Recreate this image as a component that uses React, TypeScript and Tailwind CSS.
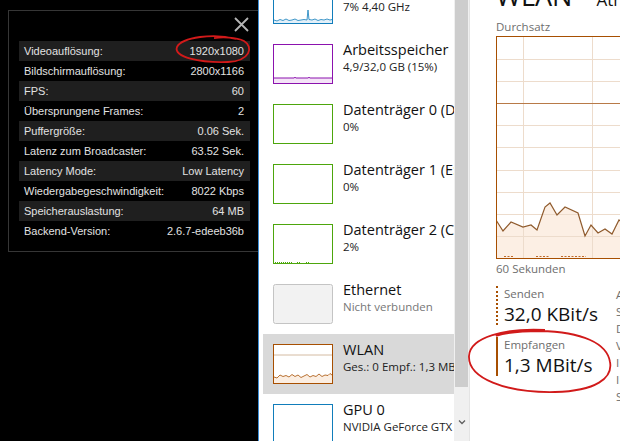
import type { ReactNode } from "react"

const stats: [string, string][] = [
  ["Videoauflösung:", "1920x1080"],
  ["Bildschirmauflösung:", "2800x1166"],
  ["FPS:", "60"],
  ["Übersprungene Frames:", "2"],
  ["Puffergröße:", "0.06 Sek."],
  ["Latenz zum Broadcaster:", "63.52 Sek."],
  ["Latency Mode:", "Low Latency"],
  ["Wiedergabegeschwindigkeit:", "8022 Kbps"],
  ["Speicherauslastung:", "64 MB"],
  ["Backend-Version:", "2.6.7-edeeb36b"],
]

type Item = {
  title: string
  sub: string
  color: string
  kind: "cpu" | "mem" | "disk" | "disk2" | "eth" | "wlan" | "gpu"
  selected?: boolean
  subGray?: boolean
}

const items: Item[] = [
  { title: "CPU", sub: "7% 4,40 GHz", color: "#117dbb", kind: "cpu" },
  { title: "Arbeitsspeicher", sub: "4,9/32,0 GB (15%)", color: "#8b12ae", kind: "mem" },
  { title: "Datenträger 0 (D:)", sub: "0%", color: "#4da60c", kind: "disk" },
  { title: "Datenträger 1 (E:)", sub: "0%", color: "#4da60c", kind: "disk" },
  { title: "Datenträger 2 (C:)", sub: "2%", color: "#4da60c", kind: "disk2" },
  { title: "Ethernet", sub: "Nicht verbunden", color: "#c4c4c4", kind: "eth", subGray: true },
  { title: "WLAN", sub: "Ges.: 0 Empf.: 1,3 MBit/s", color: "#a74f01", kind: "wlan", selected: true },
  { title: "GPU 0", sub: "NVIDIA GeForce GTX 1080", color: "#117dbb", kind: "gpu" },
]

function Thumb({ item }: { item: Item }) {
  let inner: ReactNode = null
  if (item.kind === "cpu") {
    inner = (
      <>
        <path d="M1 39 L1 36 L4 37 L7 35.5 L10 36.5 L13 35 L16 36.5 L19 36 L22 35 L25 36.5 L28 36 L31 35.5 L34 36 L35 26 L36 35.5 L39 36 L42 35 L45 36.5 L48 35.5 L51 36 L54 35 L57 36 L59 35.5 L59 39 Z" fill="#e3f0f9" stroke="none" />
        <path d="M1 36 L4 37 L7 35.5 L10 36.5 L13 35 L16 36.5 L19 36 L22 35 L25 36.5 L28 36 L31 35.5 L34 36 L35 26 L36 35.5 L39 36 L42 35 L45 36.5 L48 35.5 L51 36 L54 35 L57 36 L59 35.5" fill="none" stroke="#117dbb" strokeWidth="0.8" />
      </>
    )
  } else if (item.kind === "mem") {
    inner = (
      <>
        <rect x="1" y="34" width="58" height="5" fill="#f4e4f7" />
        <path d="M1 34 L21 34 L22 33.3 L23 34 L35 34 L36 33.3 L37 34 L59 34" fill="none" stroke="#8b12ae" strokeWidth="1" />
      </>
    )
  } else if (item.kind === "disk2") {
    inner = <path d="M2 38.5 L20 38.5 M24 38.5 L27 38.5 M33 38.5 L36 38.5" stroke="#4da60c" strokeWidth="1" strokeDasharray="1 1" />
  } else if (item.kind === "wlan") {
    inner = (
      <>
        <path d="M1 11 L59 11" stroke="#c9a98a" strokeWidth="0.8" />
        <path d="M1 39 L1 33 L4 34 L7 31 L10 32.5 L13 31.5 L16 33 L19 30.5 L22 32.5 L25 31 L28 33.5 L31 32 L34 30.5 L37 33 L40 31.5 L43 32.5 L46 30 L49 32.5 L52 31 L55 31.5 L57 29.5 L59 31 L59 39 Z" fill="#fbeee2" />
        <path d="M1 33 L4 34 L7 31 L10 32.5 L13 31.5 L16 33 L19 30.5 L22 32.5 L25 31 L28 33.5 L31 32 L34 30.5 L37 33 L40 31.5 L43 32.5 L46 30 L49 32.5 L52 31 L55 31.5 L57 29.5 L59 31" fill="none" stroke="#a74f01" strokeWidth="0.8" />
      </>
    )
  }
  return (
    <svg width="60" height="40" viewBox="0 0 60 40" className="shrink-0 block">
      <rect
        x="0.5"
        y="0.5"
        width="59"
        height="39"
        rx={item.kind === "eth" ? 2 : 0}
        fill={item.kind === "eth" ? "#f2f2f2" : "#ffffff"}
        stroke={item.color}
        strokeWidth="1"
      />
      {inner}
    </svg>
  )
}

function ListItem({ item }: { item: Item }) {
  return (
    <div className={`flex h-[60px] pt-[10px] pl-[10px] ${item.selected ? "bg-[#d9d9d9]" : ""}`}>
      <Thumb item={item} />
      <div className="ml-[10px] -mt-[3px] whitespace-nowrap">
        <div className="text-[14.5px] leading-[18px] text-[#111]">{item.title}</div>
        <div className={`text-[11.5px] leading-[16px] ${item.subGray ? "text-[#777]" : "text-[#222]"}`}>{item.sub}</div>
      </div>
    </div>
  )
}

function Chart() {
  const pts: [number, number][] = [
    [0, 184], [7, 195], [15, 186], [27, 191], [35, 189], [41, 194], [49, 171], [54, 167],
    [61, 179], [69, 171], [82, 177], [89, 200], [95, 189], [102, 197], [109, 193], [116, 198],
    [123, 184], [131, 190], [140, 186], [150, 192], [162, 188], [175, 194], [190, 187], [210, 192], [240, 188], [300, 190],
  ]
  const line = pts.map(([x, y]) => `${x},${y}`).join(" ")
  const fill = `0,222 ${line} 300,222`
  const hs = [23, 45, 89, 111, 134, 156, 178, 200]
  const vs = [27, 96, 165, 234]
  return (
    <svg width="300" height="223" viewBox="0 0 300 223" className="block shrink-0">
      <rect x="0" y="0" width="300" height="223" fill="#ffffff" />
      <polygon points={fill} fill="#fcefe4" />
      {hs.map((y) => (
        <line key={`h${y}`} x1="0" x2="300" y1={y + 0.5} y2={y + 0.5} stroke="#eddccc" strokeWidth="1" />
      ))}
      {vs.map((x) => (
        <line key={`v${x}`} x1={x + 0.5} x2={x + 0.5} y1="0" y2="223" stroke="#eddccc" strokeWidth="1" />
      ))}
      <line x1="0" x2="300" y1="67.5" y2="67.5" stroke="#b87a48" strokeWidth="1" />
      <polyline points={line} fill="none" stroke="#8f5a2c" strokeWidth="1.2" />
      <path d="M8 220.5 L18 220.5 M40 220.5 L53 220.5 M65 220.5 L90 220.5" stroke="#c06a2a" strokeWidth="1" strokeDasharray="2 1.5" />
      <rect x="0.5" y="0.5" width="299" height="222" fill="none" stroke="#a74f01" strokeWidth="1" />
    </svg>
  )
}

export default function App() {
  return (
    <div className="relative flex w-[620px] h-[441px] overflow-hidden bg-white">
      {/* stream stats overlay */}
      <div className="w-[258px] shrink-0 bg-black pt-[10px] pl-[8px] font-['Liberation_Sans',Arial,sans-serif]">
        <div className="h-[242px] border border-r-0 border-[#363636] pl-[10px] pr-[8px]">
          <div className="h-[30px] flex justify-end items-start pt-[6px] pr-[1px]">
            <svg width="15" height="15" viewBox="0 0 15 15">
              <path d="M1 1 L14 14 M14 1 L1 14" stroke="#b4b4b4" strokeWidth="1.8" />
            </svg>
          </div>
          {stats.map(([k, v], i) => (
            <div
              key={k}
              className={`flex h-[20px] items-center justify-between pl-[5px] pr-[6px] text-[11px] text-[#e2e2e2] ${i % 2 === 0 ? "bg-[#1f1f1f]" : ""}`}
            >
              <span>{k}</span>
              <span>{v}</span>
            </div>
          ))}
        </div>
      </div>
      <div className="w-px shrink-0 bg-[#3d8fd8]" />

      {/* task manager side list */}
      <div className="w-[195px] shrink-0 overflow-hidden pl-[4px] font-['Open_Sans','Noto_Sans',sans-serif]">
        <div className="-mt-[26px]">
          {items.map((it) => (
            <ListItem key={it.title} item={it} />
          ))}
        </div>
      </div>

      {/* scrollbar */}
      <div className="w-[16px] shrink-0 bg-[#f0f0f0] flex flex-col border-r border-[#e4e4e4]">
        <div className="h-[387px] bg-[#cdcdcd] ml-[1px] mr-[1px]" />
        <div className="flex-1 flex items-end justify-center pb-[16px]">
          <svg width="8" height="6" viewBox="0 0 8 6">
            <path d="M1 1.5 L4 4.5 L7 1.5" fill="none" stroke="#606060" strokeWidth="1.3" />
          </svg>
        </div>
      </div>

      {/* main panel */}
      <div className="flex-1 min-w-0 overflow-hidden pl-[26px] font-['Open_Sans','Noto_Sans',sans-serif]">
        <div className="-mt-[19px] h-[38px] flex items-baseline whitespace-nowrap">
          <span className="text-[27px] leading-[30px] text-[#111]">WLAN</span>
          <span className="ml-[24px] text-[17px] leading-[20px] text-[#111]">Atheros AR9485WB-EG Wireless</span>
        </div>
        <div className="text-[11.5px] leading-[16px] text-[#6e6e6e]">Durchsatz</div>
        <div className="mt-px">
          <Chart />
        </div>
        <div className="mt-[2px] text-[11.5px] leading-[16px] text-[#6e6e6e]">60 Sekunden</div>
        <div className="mt-[9px] flex">
          <div className="w-[120px] shrink-0">
            <div className="border-l-2 border-dotted border-[#a74f01] pl-[6px] pt-[1px]">
              <div className="text-[11.5px] leading-[14px] text-[#6e6e6e]">Senden</div>
              <div className="mt-[2px] text-[19px] leading-[22px] text-[#111] whitespace-nowrap">32,0 KBit/s</div>
            </div>
            <div className="mt-[12px] border-l-2 border-[#a74f01] pl-[6px] pt-[1px]">
              <div className="text-[11.5px] leading-[14px] text-[#6e6e6e]">Empfangen</div>
              <div className="mt-[2px] text-[19px] leading-[22px] text-[#111] whitespace-nowrap">1,3 MBit/s</div>
            </div>
          </div>
          <div className="text-[11.5px] leading-[17px] text-[#6e6e6e] whitespace-nowrap">
            <div>Adapter-Name:</div>
            <div>SSID:</div>
            <div>DNS-Name:</div>
            <div>Verbindungstyp:</div>
            <div>IPv4-Adresse:</div>
            <div>IPv6-Adresse:</div>
            <div>Signalstärke:</div>
          </div>
        </div>
      </div>

      {/* red hand-drawn marks */}
      <svg className="absolute left-0 top-0 pointer-events-none" width="620" height="441" viewBox="0 0 620 441">
        <path
          d="M236 39 C214 33 182 37 177 47 C173 57 200 63 228 62 C250 61 254 47 244 41 C236 37 222 37 214 38"
          fill="none"
          stroke="#d11a1a"
          strokeWidth="1.8"
        />
        <path
          d="M545 330 C505 328 470 337 469 356 C468 378 505 393 555 392 C596 391 613 378 610 362 C607 343 582 332 540 331 C520 331 505 333 496 336"
          fill="none"
          stroke="#d11a1a"
          strokeWidth="1.8"
        />
      </svg>
    </div>
  )
}
